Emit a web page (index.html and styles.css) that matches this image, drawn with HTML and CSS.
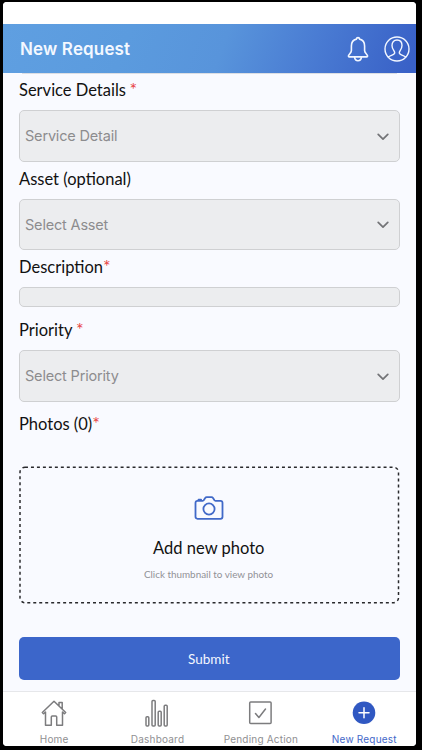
FILE: index.html
```html
<!DOCTYPE html>
<html lang="en">
<head>
<meta charset="utf-8">
<title>New Request</title>
<link rel="stylesheet" href="styles.css">
</head>
<body>
<div class="screen">
  <div class="status"></div>
  <header class="header">
    <h1>New Request</h1>
    <svg class="bell" width="24" height="28" viewBox="0 0 24 28"><path d="M12 2.600c-.9 0-1.500.6-1.600 1.500C7 4.900 5.400 7.600 5.400 11v4.500c0 2.700-3 4-3 5.600 0 .5.3.8.8.8h17.600c.5 0 .8-.3.8-.8 0-1.600-3-2.900-3-5.600V11c0-3.400-1.600-6.100-5-6.900-.1-.9-.7-1.500-1.600-1.500zM8.500 22.200c.3 2.300 1.600 3.500 3.500 3.500s3.200-1.200 3.500-3.500"/></svg>
    <svg class="user" width="26" height="26" viewBox="0 0 26 26"><circle cx="13" cy="13" r="12"/><path d="M4.300 21c2-1.900 6.400-1.800 6.400-4.200 0-1.900-2.700-3.400-2.700-7.300C8 6.200 9.900 4 13 4s5 2.200 5 5.500c0 3.900-2.700 5.400-2.700 7.300 0 2.400 4.400 2.300 6.400 4.200"/></svg>
  </header>
  <main class="form">
    <label class="spaced"><span>Service Details</span><i>*</i></label>
    <div class="select"><span>Service Detail</span><svg width="12" height="8" viewBox="0 0 12 8"><path d="M1.200 1.300 6 6.200l4.800-4.900"/></svg></div>
    <label><span>Asset (optional)</span></label>
    <div class="select short"><span>Select Asset</span><svg width="12" height="8" viewBox="0 0 12 8"><path d="M1.200 1.300 6 6.200l4.800-4.900"/></svg></div>
    <label><span>Description</span><i>*</i></label>
    <div class="textarea"></div>
    <label class="spaced"><span>Priority</span><i>*</i></label>
    <div class="select"><span>Select Priority</span><svg width="12" height="8" viewBox="0 0 12 8"><path d="M1.200 1.300 6 6.200l4.800-4.900"/></svg></div>
    <label class="photos"><span>Photos (0)</span><i>*</i></label>
    <div class="photo">
      <svg class="frame" width="382" height="138" viewBox="0 0 382 138"><rect x="1" y="1" width="380" height="136" rx="5"/></svg>
      <svg class="camera" width="30" height="24" viewBox="0 0 30 24"><path d="M3.500 4.800h5.200c.5 0 .9-.2 1.200-.7l1.300-2c.4-.6.8-.9 1.500-.9h4.800c.7 0 1.100.3 1.500.9l1.300 2c.3.500.7.7 1.200.7h5c1.300 0 2 .8 2 2v14c0 1.200-.7 2-2 2h-23c-1.300 0-2-.8-2-2v-14c0-1.200.7-2 2-2z"/><circle cx="15" cy="13" r="5.600"/><path d="M4.500 4V3.700h2.600V4"/></svg>
      <div class="add">Add new photo</div>
      <div class="hint">Click thumbnail to view photo</div>
    </div>
    <button class="submit">Submit</button>
  </main>
  <nav class="tabs">
    <div class="tab"><svg width="26" height="28" viewBox="0 0 26 28"><path d="M1.300 13.500 13 2.200l11.700 11.300-1.200 1.200-2-1.700v13.200h-5.800V18c0-.7-.3-1-1-1h-3.400c-.7 0-1 .3-1 1v8.200H4.500V13l-2 1.700zM18 6.500V3.600h3.200v6.200"/></svg><span>Home</span></div>
    <div class="tab"><svg width="26" height="28" viewBox="0 0 26 28"><rect x="2" y="17.700" width="2.800" height="9.200" rx="1"/><rect x="8" y="1.400" width="3.200" height="25.500" rx="1"/><rect x="14.200" y="12.200" width="3" height="14.700" rx="1"/><rect x="20.200" y="6.200" width="3" height="20.700" rx="1"/></svg><span>Dashboard</span></div>
    <div class="tab"><svg width="26" height="28" viewBox="0 0 26 28"><rect x="2.700" y="3" width="21.400" height="21.400" rx="1"/><path d="m8.500 14.500 3.400 4 6.600-8.500"/></svg><span>Pending Action</span></div>
    <div class="tab active"><svg width="26" height="28" viewBox="0 0 26 28"><circle cx="13" cy="13.700" r="11.300"/><path d="M13 8.700v10M8 13.700h10"/></svg><span>New Request</span></div>
  </nav>
</div>
</body>
</html>
```
FILE: styles.css
```css
* { box-sizing: border-box; }
body {
  margin: 0;
  height: 750px;
  padding: 2px 6px 4px 2.500px;
  background: #000;
  overflow: hidden;
  font-family: Lato, sans-serif;
}
.screen {
  height: 743.500px;
  display: flex;
  flex-direction: column;
  background: #f9faff;
  border-radius: 4px;
  overflow: hidden;
}
.status { height: 22px; background: #fff; flex: none; }
.header {
  height: 49px;
  flex: none;
  display: flex;
  align-items: center;
  padding: 0 6.500px 0 17.500px;
  background: linear-gradient(110deg, #5f9fe1 0%, #5b9bde 30%, #5894db 53%, #4a7cd3 74%, #3961c7 98%);
  color: #f4f8ff;
}
h1 {
  flex: 1;
  margin: 0;
  font: 600 17px/24px Inter, sans-serif;
  letter-spacing: .15px;
  white-space: nowrap;
}
svg { display: block; flex: none; fill: none; stroke-linecap: round; stroke-linejoin: round; }
.bell, .user { stroke: #f1f6ff; stroke-width: 1.600; }
.user { margin-left: 14px; stroke-width: 1.400; }
.form { flex: none; height: 618px; padding: 0 16.500px; }
.form::before {
  content: "";
  display: block;
  height: 4px;
  margin: 0 3px;
  border-top: 1px solid #dcdee3;
}
label {
  display: flex;
  align-items: center;
  height: 24px;
  color: #111;
  font-size: 16.500px;
  line-height: 24px;
  white-space: nowrap;
}
label i {
  color: #e8423f;
  font-style: normal;
  font-size: 18px;
  line-height: 24px;
  padding-bottom: 3px;
}
.spaced i { margin-left: 3.500px; }
.select {
  height: 52px;
  margin: 8px 0 5px;
  padding: 0 10px 0 5px;
  display: flex;
  align-items: center;
  justify-content: space-between;
  border: 1px solid #cfd0d2;
  border-radius: 5px;
  background: #ecedef;
  color: #8c8c8e;
  font: 400 14.500px/20px Inter, sans-serif;
  letter-spacing: -.18px;
}
.select.short { height: 51px; }
.select svg { margin-top: 1px; stroke: #737477; stroke-width: 1.700; }
.textarea {
  height: 20px;
  margin: 8px 0 11px;
  border: 1px solid #cfd0d2;
  border-radius: 5px;
  background: #ecedef;
}
.photos { margin-top: 10px; }
.photo {
  position: relative;
  height: 138px;
  margin-top: 30px;
  display: flex;
  flex-direction: column;
  align-items: center;
  padding-top: 30px;
}
.frame { position: absolute; inset: 0; width: 100%; stroke: #29292c; stroke-width: 1.500; stroke-dasharray: 3 3; stroke-linecap: butt; }
.camera { margin-right: 1px; stroke: #4169c8; stroke-width: 1.800; }
.add { margin-top: 16px; margin-right: 1px; color: #111; font-size: 16.500px; line-height: 24px; }
.hint { margin-top: 6px; margin-right: 1.500px; color: #919196; font-size: 9.900px; line-height: 16px; }
.submit {
  display: block;
  width: 100%;
  height: 43px;
  margin-top: 33px;
  padding: 0 1px 0 0;
  border: 0;
  border-radius: 5px;
  background: #3c66ca;
  color: #f4f7ff;
  font: 400 13.500px/20px Lato, sans-serif;
}
.tabs {
  flex: 1;
  display: grid;
  grid-template-columns: repeat(4, 1fr);
  border-top: 1px solid #e6e7ea;
  background: #fff;
}
.tab {
  display: flex;
  flex-direction: column;
  align-items: center;
  padding-top: 7px;
  color: #909092;
  font: 400 10px/14px Inter, sans-serif;
}
.tab span { margin-top: 5px; white-space: nowrap; letter-spacing: .2px; }
.tab svg { margin-right: 1px; stroke: #7c7c7e; stroke-width: 1.500; }
.tab.active { color: #4468c9; }
.active circle { fill: #3058c2; stroke: none; }
.tab.active svg { stroke: #fff; stroke-width: 1.500; }
```
